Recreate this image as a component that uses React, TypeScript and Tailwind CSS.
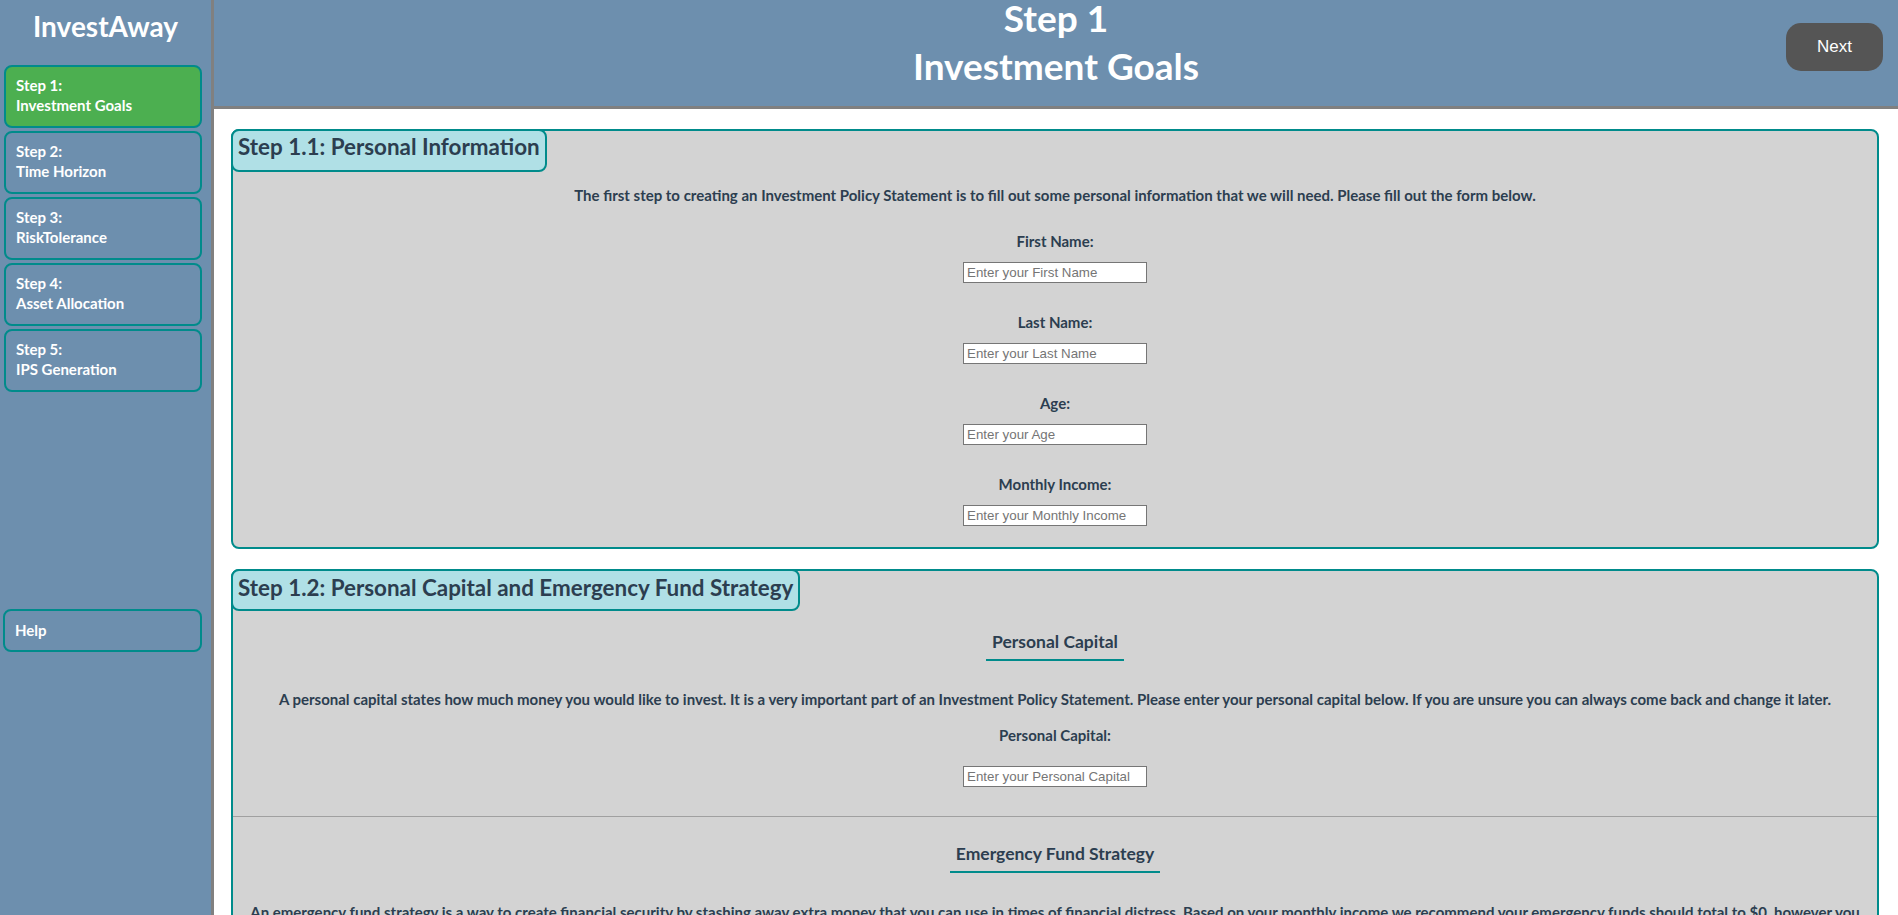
import React, { useState } from 'react';

const steps = [
    { num: 'Step 1:', name: 'Investment Goals' },
    { num: 'Step 2:', name: 'Time Horizon' },
    { num: 'Step 3:', name: 'RiskTolerance' },
    { num: 'Step 4:', name: 'Asset Allocation' },
    { num: 'Step 5:', name: 'IPS Generation' },
];

const fields = [
    { label: 'First Name:', placeholder: 'Enter your First Name' },
    { label: 'Last Name:', placeholder: 'Enter your Last Name' },
    { label: 'Age:', placeholder: 'Enter your Age' },
    { label: 'Monthly Income:', placeholder: 'Enter your Monthly Income' },
];

const TextInput: React.FC<{ placeholder: string; className?: string }> = ({ placeholder, className = '' }) => (
    <input
        type="text"
        placeholder={placeholder}
        className={`block w-[184px] h-[21px] border border-[#767676] bg-white pl-[3px] text-[13.33px] font-['Liberation_Sans',Arial,sans-serif] text-black placeholder:text-[#757575] outline-none ${className}`}
    />
);

const App: React.FC = () => {
    const [active, setActive] = useState(0);
    const income = 0;

    return (
        <div className="flex h-screen w-full overflow-hidden font-['Lato','Open_Sans',sans-serif] text-[#2c3e50]">
            {/* Sidebar */}
            <aside className="w-[214px] shrink-0 h-full bg-[#6d8fae] border-r-[3px] border-[#808080] flex flex-col">
                <h1 className="mt-[9px] text-center text-[28px] leading-[34px] font-bold text-white">InvestAway</h1>
                <nav className="mt-[22px] ml-[4px] flex flex-col gap-[3px]">
                    {steps.map((s, i) => (
                        <button
                            key={s.num}
                            onClick={() => setActive(i)}
                            className={`w-[198px] rounded-[8px] border-2 border-[#008b8b] pl-[10px] pt-[8px] pb-[11px] text-left text-[15px] leading-[20px] font-bold text-white ${
                                active === i ? 'bg-[#4caf50]' : 'bg-[#6d8fae]'
                            }`}
                        >
                            <div>{s.num}</div>
                            <div>{s.name}</div>
                        </button>
                    ))}
                </nav>
                <button className="mt-[217px] ml-[3px] w-[199px] rounded-[8px] border-2 border-[#008b8b] pl-[10px] pt-[9px] pb-[10px] text-left text-[15px] leading-[20px] font-bold text-white">
                    Help
                </button>
            </aside>

            <div className="flex-1 min-w-0 flex flex-col">
                {/* Header */}
                <header className="h-[109px] shrink-0 bg-[#6d8fae] border-b-[3px] border-[#808080] grid grid-cols-[1fr_auto_1fr]">
                    <div></div>
                    <div className="text-center font-bold text-white text-[37px]">
                        <div className="leading-[36px]">Step 1</div>
                        <div className="leading-[60px]">Investment Goals</div>
                    </div>
                    <div className="flex justify-end items-start">
                        <button className="mt-[23px] mr-[15px] w-[97px] h-[48px] rounded-[15px] bg-[#555555] text-white text-[17px] font-['Liberation_Sans',Arial,sans-serif]">
                            Next
                        </button>
                    </div>
                </header>

                {/* Content */}
                <main className="flex-1 overflow-hidden bg-white pt-[20px] pl-[17px] pr-[19px]">
                    {/* Step 1.1 */}
                    <section className="rounded-[8px] border-2 border-[#008b8b] bg-[#d3d3d3] pb-[21px] flex flex-col items-center">
                        <h2 className="self-start -mt-[2px] -ml-[2px] rounded-[8px] border-2 border-[#008b8b] bg-[#b0e0e6] px-[5px] pt-[1px] pb-[8px] text-[22.4px] leading-[30px] font-bold">
                            Step 1.1: Personal Information
                        </h2>
                        <p className="mt-[14px] text-[15px] leading-[18px] font-bold text-center">
                            The first step to creating an Investment Policy Statement is to fill out some personal information that we will need. Please fill out the form below.
                        </p>
                        {fields.map((f, i) => (
                            <div key={f.label} className={`flex flex-col items-center ${i === 0 ? 'mt-[28px]' : 'mt-[30px]'}`}>
                                <label className="text-[15px] leading-[18px] font-bold">{f.label}</label>
                                <TextInput placeholder={f.placeholder} className="mt-[12px]" />
                            </div>
                        ))}
                    </section>

                    {/* Step 1.2 */}
                    <section className="mt-[20px] rounded-[8px] border-2 border-[#008b8b] bg-[#d3d3d3] pb-[20px] flex flex-col items-center">
                        <h2 className="self-start -mt-[2px] -ml-[2px] rounded-[8px] border-2 border-[#008b8b] bg-[#b0e0e6] px-[5px] pt-[2px] pb-[6px] text-[22.4px] leading-[30px] font-bold">
                            Step 1.2: Personal Capital and Emergency Fund Strategy
                        </h2>
                        <h3 className="mt-[20px] border-b-2 border-[#008b8b] px-[6px] pb-[6px] text-[17.5px] leading-[22px] font-bold">
                            Personal Capital
                        </h3>
                        <p className="mt-[29px] px-[16px] text-[15px] leading-[18px] font-bold text-center">
                            A personal capital states how much money you would like to invest. It is a very important part of an Investment Policy Statement. Please enter your personal capital below. If you are unsure you can always come back and change it later.
                        </p>
                        <label className="mt-[18px] text-[15px] leading-[18px] font-bold">Personal Capital:</label>
                        <TextInput placeholder="Enter your Personal Capital" className="mt-[22px]" />
                        <div className="mt-[29px] w-full border-t border-[#a0a0a0]"></div>
                        <h3 className="mt-[26px] border-b-2 border-[#008b8b] px-[6px] pb-[6px] text-[17.5px] leading-[22px] font-bold">
                            Emergency Fund Strategy
                        </h3>
                        <p className="mt-[30px] px-[16px] text-[15px] leading-[18px] font-bold text-center">
                            An emergency fund strategy is a way to create financial security by stashing away extra money that you can use in times of financial distress. Based on your monthly income we recommend your emergency funds should total to ${income}, however you can choose to save more or less depending on your own situation.
                        </p>
                    </section>
                </main>
            </div>
        </div>
    );
};

export default App;
